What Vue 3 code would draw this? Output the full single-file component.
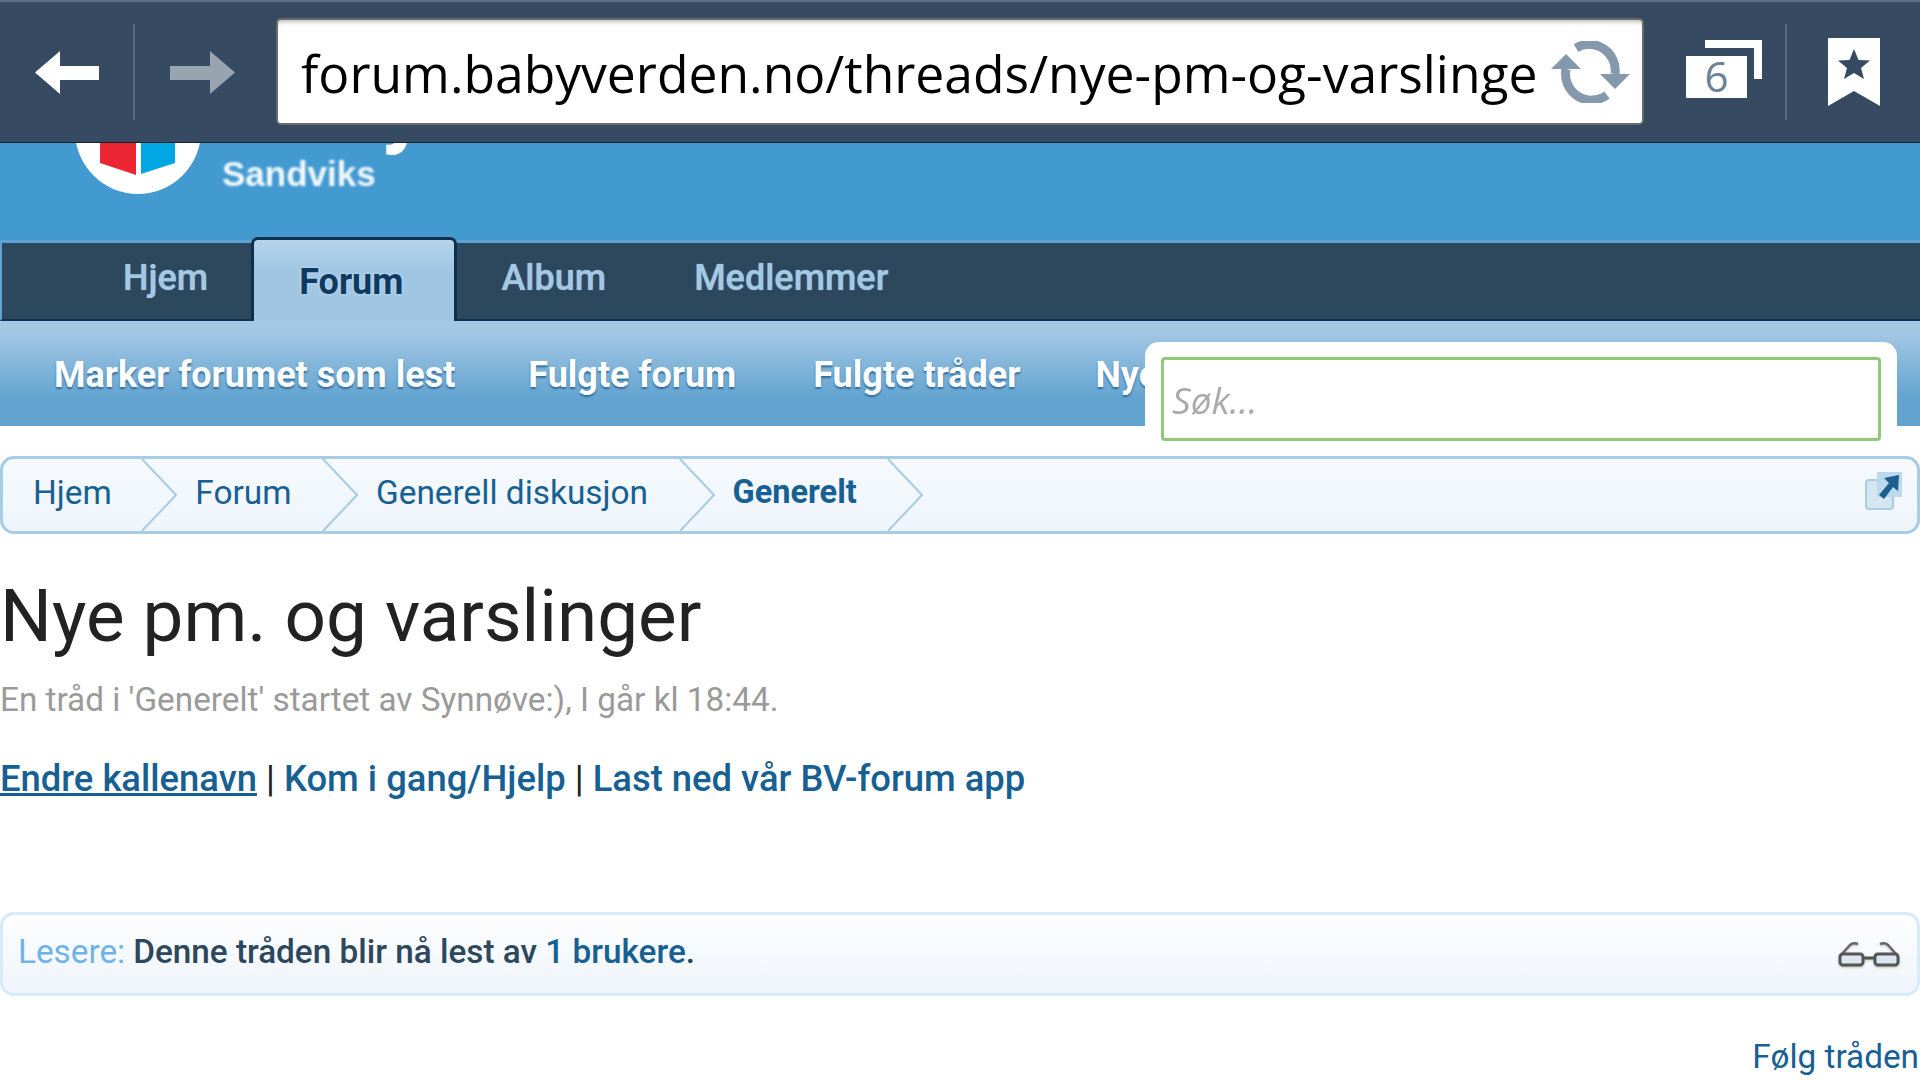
<template>
  <div class="page">
    <div class="toolbar">
      <button class="tool-btn first">
        <svg width="64" height="43" viewBox="0 0 64 43"><polygon points="0,21.5 25,0 25,15 64,15 64,29 25,29 25,43" fill="#fff" /></svg>
      </button>
      <span class="divider"></span>
      <button class="tool-btn second">
        <svg width="65" height="43" viewBox="0 0 65 43"><polygon points="65,21.5 40,0 40,15 0,15 0,29 40,29 40,43" fill="#98a5b1" /></svg>
      </button>
      <div class="url-box">
        <span class="url-text">forum.babyverden.no/threads/nye-pm-og-varslinge</span>
        <svg class="reload" width="80" height="62" viewBox="0 0 80 62">
          <path d="M25 7 A26 26 0 0 1 64 33" fill="none" stroke="#8499ae" stroke-width="9" />
          <path d="M56 54 A26 26 0 0 1 15 28" fill="none" stroke="#8499ae" stroke-width="9" />
          <polygon points="0,28 15,13 30,28" fill="#8499ae" />
          <polygon points="49,33 79,33 64,48" fill="#8499ae" />
        </svg>
      </div>
      <div class="tabs-icon">
        <span class="tabs-back"></span>
        <span class="tabs-front">6</span>
      </div>
      <span class="divider"></span>
      <svg class="bookmark" width="52" height="68" viewBox="0 0 52 68">
        <polygon points="0,0 52,0 52,68 26,53 0,68" fill="#fff" />
        <polygon points="26,11 30.500,22 42,22.500 33,30 36,41 26,35 16,41 19,30 10,22.500 21.500,22" fill="#364b62" />
      </svg>
    </div>

    <header class="brand">
      <svg class="logo" width="130" height="52" viewBox="0 0 130 52">
        <circle cx="62" cy="-12" r="63" fill="#fff" />
        <polygon points="24,0 60,0 60,32 24,20" fill="#ec2733" />
        <polygon points="65,0 99,0 99,20 65,31" fill="#00a7e3" />
      </svg>
      <span class="brand-tail">y</span>
      <span class="brand-name">Sandviks</span>
    </header>

    <nav class="main-nav">
      <a v-for="item in navItems" :key="item" class="nav-item" :class="{ active: item === 'Forum' }">{{ item }}</a>
    </nav>

    <div class="sub-nav">
      <a v-for="item in subItems" :key="item" class="sub-item">{{ item }}</a>
      <div class="search-wrap">
        <div class="search-input">Søk...</div>
      </div>
    </div>

    <div class="crumbs">
      <div v-for="crumb in crumbs" :key="crumb" class="crumb" :class="{ current: crumb === 'Generelt' }">
        <span>{{ crumb }}</span>
        <svg class="chevron" width="36" height="72" viewBox="0 0 36 72" preserveAspectRatio="none">
          <polyline points="1,0 35,36 1,72" fill="none" stroke="#a6cce6" stroke-width="2" vector-effect="non-scaling-stroke" />
        </svg>
      </div>
      <svg class="jump" width="38" height="39" viewBox="0 0 38 39">
        <rect x="1" y="9" width="27" height="29" rx="3" fill="#d5e6f3" stroke="#a6cce6" stroke-width="2" />
        <rect x="12" y="1" width="25" height="25" fill="#bcd8ec" />
        <polygon points="14,24 24,12 19,7 34,4 33,20 28,16 19,28" fill="#1d5f8f" />
      </svg>
    </div>

    <h1 class="title">Nye pm. og varslinger</h1>
    <p class="meta">En tråd i 'Generelt' startet av Synnøve:), I går kl 18:44.</p>
    <p class="links">
      <a class="underlined">Endre kallenavn</a> <span class="sep">|</span> <a>Kom i gang/Hjelp</a> <span class="sep">|</span> <a>Last ned vår BV-forum app</a>
    </p>

    <div class="readers">
      <span class="readers-label">Lesere:</span>
      <span class="readers-text">Denne tråden blir nå lest av <a>1 brukere</a>.</span>
      <svg class="glasses" width="62" height="27" viewBox="0 0 62 27">
        <path d="M3 14 L12 4 Q15 1 20 3 M59 14 L50 4 Q47 1 42 3" fill="none" stroke="#666" stroke-width="2.500" />
        <rect x="2" y="13" width="23" height="11" rx="3" fill="#dce6f0" stroke="#555" stroke-width="3" />
        <rect x="37" y="13" width="23" height="11" rx="3" fill="#dce6f0" stroke="#555" stroke-width="3" />
        <path d="M25 17 H37" stroke="#555" stroke-width="3" />
      </svg>
    </div>

    <div class="follow"><a>Følg tråden</a></div>
  </div>
</template>

<script setup>
const navItems = ['Hjem', 'Forum', 'Album', 'Medlemmer']
const subItems = ['Marker forumet som lest', 'Fulgte forum', 'Fulgte tråder', 'Nye innlegg']
const crumbs = ['Hjem', 'Forum', 'Generell diskusjon', 'Generelt']
</script>

<style>
html, body {
  margin: 0;
  background: #fff;
}
</style>

<style scoped>
.page {
  width: 1920px;
  height: 1080px;
  overflow: hidden;
  font-family: Roboto, sans-serif;
  color: #222;
}

/* browser chrome */
.toolbar {
  display: flex;
  align-items: center;
  height: 140px;
  box-sizing: content-box;
  background: #364b62;
  border-top: 2px solid #5a7088;
  border-bottom: 1px solid #15222e;
}
.tool-btn {
  display: flex;
  background: none;
  border: none;
  padding: 0;
}
.tool-btn.first {
  margin: 0 34px 0 35px;
}
.tool-btn.second {
  margin: 0 41px 0 35px;
}
.divider {
  width: 2px;
  height: 96px;
  background: #566a80;
}
.url-box {
  display: flex;
  align-items: center;
  width: 1368px;
  height: 107px;
  margin-bottom: 1px;
  box-sizing: border-box;
  background: #fff;
  border: 2px solid #6b6b6b;
  border-radius: 5px;
  padding-left: 23px;
  box-shadow: inset 0 5px 4px -3px #bbb;
}
.url-text {
  font-family: "Open Sans", sans-serif;
  font-size: 51.600px;
  color: #000;
  white-space: nowrap;
  width: 1250px;
  padding-top: 2px;
}
.tabs-icon {
  position: relative;
  width: 76px;
  height: 58px;
  margin: 0 23px 6px 42px;
}
.tabs-back {
  position: absolute;
  right: 0;
  top: 0;
  width: 49px;
  height: 31px;
  border-top: 8px solid #fff;
  border-right: 8px solid #fff;
}
.tabs-front {
  position: absolute;
  left: 0;
  bottom: 0;
  width: 61px;
  height: 42px;
  background: #fff;
  color: #6d8296;
  font-family: "Open Sans", sans-serif;
  font-size: 42px;
  line-height: 40px;
  text-align: center;
}
.bookmark {
  margin-left: 41px;
}

/* site header */
.brand {
  position: relative;
  height: 97px;
  background: #429ad1;
  overflow: hidden;
}
.logo {
  display: block;
  margin-left: 76px;
}
.brand-tail {
  position: absolute;
  left: 381px;
  top: -87px;
  font-size: 90px;
  line-height: 100px;
  font-weight: 700;
  color: #fff;
}
.brand-name {
  position: absolute;
  left: 222px;
  top: 10px;
  font-family: "Liberation Sans", sans-serif;
  font-weight: 700;
  font-size: 35px;
  line-height: 42px;
  color: #f2f8fc;
  filter: blur(0.8px);
}

.main-nav {
  position: relative;
  display: flex;
  height: 81px;
  box-sizing: border-box;
  background: #2d475d;
  border-top: 3px solid #5ea3d4;
  border-bottom: 2px solid #0e2f4f;
  border-left: 2px solid #5ea3d4;
  padding-left: 77px;
}
.nav-item {
  font-size: 36px;
  font-weight: 500;
  line-height: 70px;
  color: #a3c8e4;
  padding: 0 44px;
  text-shadow: 0 0 1px #a3c8e4;
}
.nav-item:first-child {
  padding-right: 43px;
}
.nav-item.active {
  height: 84px;
  margin-top: -6px;
  padding: 0 51px 0 45px;
  box-sizing: border-box;
  border: 3px solid #0e2f4f;
  border-bottom: none;
  border-radius: 7px 7px 0 0;
  background: linear-gradient(#b7d4ea, #a0c6e3 30px);
  color: #0e3a61;
  font-weight: 700;
  line-height: 84px;
  text-shadow: 0 0 3px #d4e6f4;
}

.sub-nav {
  position: relative;
  display: flex;
  height: 105px;
  background: linear-gradient(#a3c8e4 10%, #62a3d0 75%);
  padding-left: 54px;
}
.sub-item {
  font-size: 36px;
  font-weight: 700;
  line-height: 108px;
  color: #fff;
  text-shadow: 0 2px 2px #2f6c9d;
  margin-right: 75px;
  white-space: nowrap;
}
.sub-item:nth-child(1) {
  margin-right: 73px;
}
.sub-item:nth-child(2) {
  margin-right: 77px;
}
.search-wrap {
  position: absolute;
  left: 1145px;
  top: 21px;
  width: 752px;
  height: 102px;
  background: #fff;
  border-radius: 14px 14px 0 0;
  padding: 15px 0 0 16px;
  box-sizing: border-box;
}
.search-input {
  width: 720px;
  height: 84px;
  box-sizing: border-box;
  border: 3px solid #90c978;
  border-radius: 4px;
  padding-left: 8px;
  font-family: "Open Sans", sans-serif;
  font-style: italic;
  font-size: 37px;
  line-height: 80px;
  color: #aaa;
  filter: blur(0.5px);
}

/* breadcrumb */
.crumbs {
  display: flex;
  align-items: stretch;
  height: 78px;
  margin-top: 30px;
  box-sizing: border-box;
  border: 3px solid #a6cce6;
  border-radius: 14px;
  background: linear-gradient(#f6fafd, #eef5fc);
  padding-left: 30px;
  color: #176093;
  font-size: 33.400px;
}
.crumb {
  display: flex;
  align-items: center;
  margin-right: 18px;
}
.crumb span {
  margin: 0 30.500px 6px 0;
}
.crumb:first-child span {
  margin-right: 29.500px;
}
.crumb.current {
  font-weight: 700;
  font-size: 32.500px;
}
.chevron {
  height: 100%;
  display: block;
}
.jump {
  margin: auto 14px auto auto;
  position: relative;
  top: -5px;
}

.title {
  margin: 30px 0 0;
  font-size: 72.800px;
  font-weight: 400;
  line-height: 104px;
  color: #222;
}
.meta {
  margin: 7px 0 0;
  font-size: 33.300px;
  line-height: 50px;
  color: #9a9a9a;
}
.links {
  margin: 29px 0 0;
  font-size: 36.400px;
  line-height: 50px;
  font-weight: 500;
  color: #176093;
}
.underlined {
  text-decoration: underline;
}
.sep {
  color: #222;
  font-weight: 400;
}

.readers {
  display: flex;
  align-items: center;
  height: 84px;
  margin-top: 108px;
  box-sizing: border-box;
  border: 3px solid #d7ebfb;
  border-radius: 14px;
  background: linear-gradient(#fdfeff, #eff5fc);
  padding-left: 15px;
  font-size: 33.300px;
}
.readers-label {
  color: #6fb3e8;
  margin: 0 8px 5px 0;
}
.readers-text {
  color: #2d475d;
  font-weight: 500;
  margin-bottom: 5px;
}
.readers-text a {
  color: #176093;
}
.glasses {
  margin: 0 17px 0 auto;
  filter: drop-shadow(0 1px 1px #bbb);
}
.follow {
  margin-top: 41px;
  text-align: right;
  padding-right: 1px;
  font-size: 33.300px;
  line-height: 40px;
  color: #176093;
}
</style>
